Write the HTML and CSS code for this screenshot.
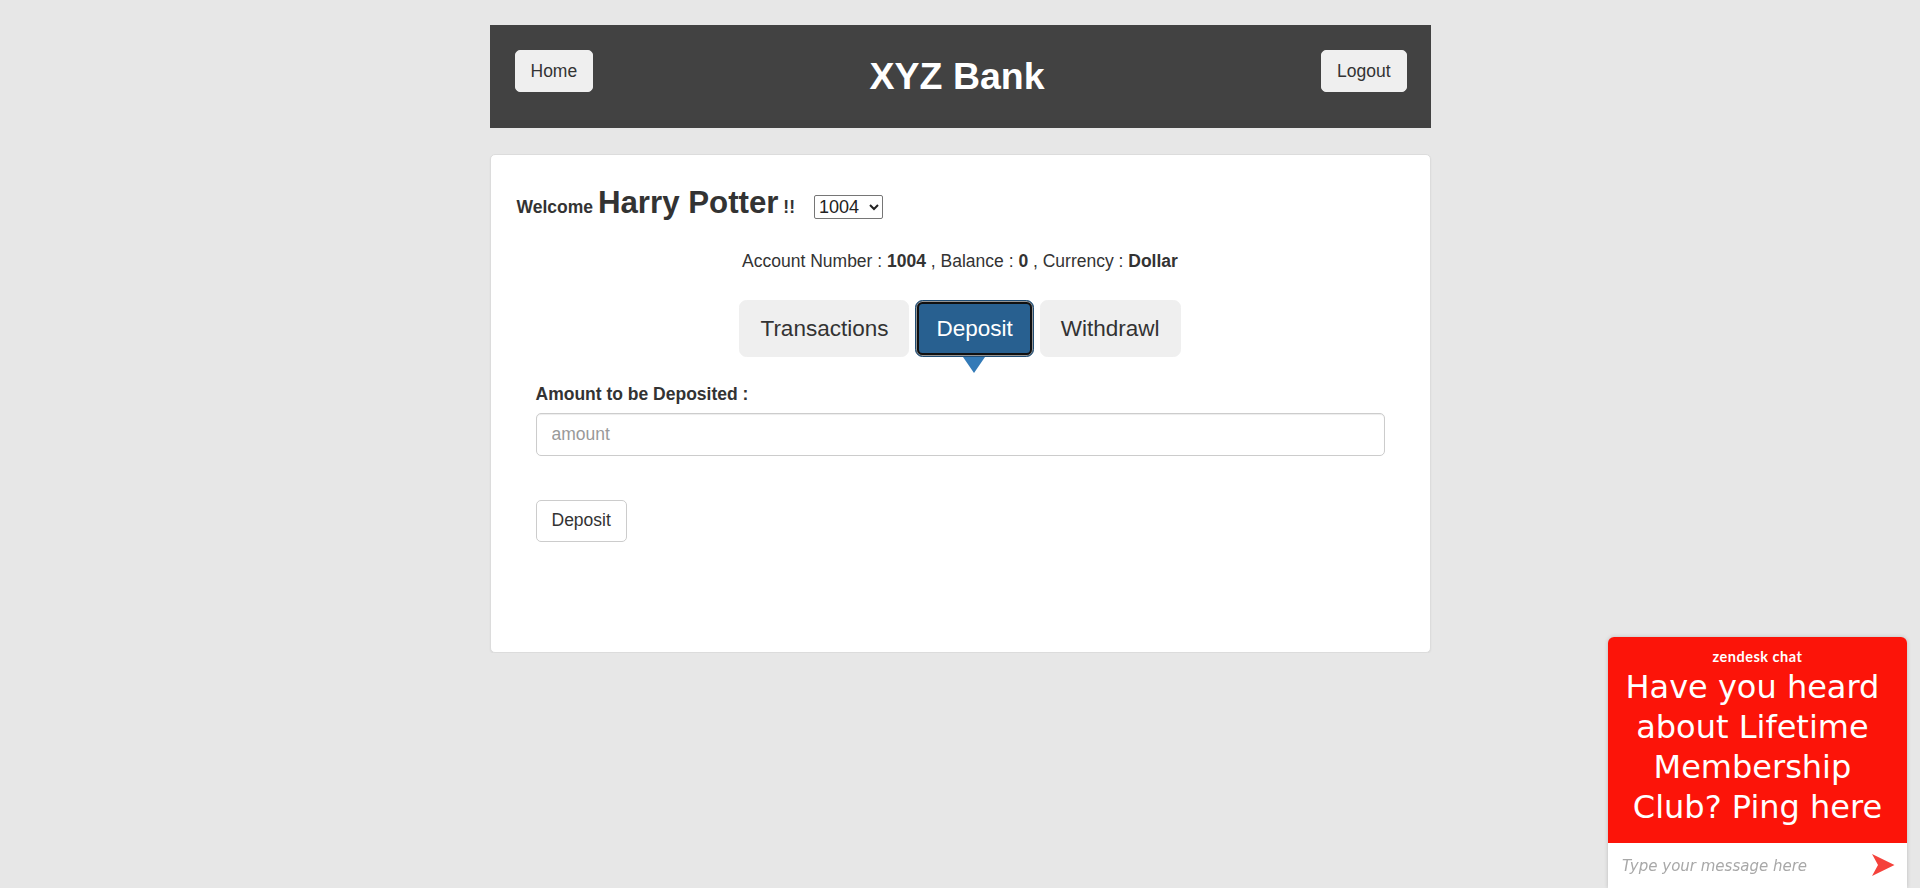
FILE: index.html
```html
<!DOCTYPE html>
<html lang="en">
<head>
<meta charset="utf-8">
<title>XYZ Bank</title>
<link rel="stylesheet" href="styles.css">
</head>
<body>
<div class="page">
  <header class="top">
    <button class="btn hbtn">Home</button>
    <h1 class="brand">XYZ Bank</h1>
    <button class="btn hbtn">Logout</button>
  </header>

  <main class="card">
    <div class="welcome-row">
      <strong>Welcome <span class="name">Harry Potter</span> !!</strong><select class="acct-select"><option>1004</option><option>1005</option><option>1006</option></select>
    </div>

    <div class="acct">Account Number : <strong>1004</strong> , Balance : <strong>0</strong> , Currency : <strong>Dollar</strong></div>

    <div class="tabs">
      <button class="btn tab">Transactions</button>
      <button class="btn tab active">Deposit</button>
      <button class="btn tab">Withdrawl</button>
    </div>

    <form class="form">
      <label class="lbl" for="amount">Amount to be Deposited :</label>
      <input id="amount" class="amount" type="number" placeholder="amount">
      <button type="button" class="btn submit">Deposit</button>
    </form>
  </main>
</div>

<aside class="zd">
  <div class="zd-head">
    <div class="zd-logo">zendesk chat</div>
    <div class="zd-msg">Have you heard&nbsp;<br>about Lifetime&nbsp;<br>Membership&nbsp;<br>Club? Ping here</div>
  </div>
  <div class="zd-input">
    <input class="zd-field" type="text" placeholder="Type your message here">
    <svg class="zd-send" width="23" height="23" viewBox="0 0 23 23" aria-hidden="true">
      <polygon points="0,0 22.5,11 0,22 6,11" fill="#f5423b"/>
    </svg>
  </div>
</aside>
</body>
</html>
```

FILE: styles.css
```css
html, body {
  margin: 0;
  padding: 0;
}
body {
  background: #e7e7e7;
  font-family: "Liberation Sans", Arial, sans-serif;
  font-size: 17.5px;
  line-height: 1.42857;
  color: #333;
}
.page {
  width: 941px;
  margin: 25px auto 0;
}

/* header */
.top {
  box-sizing: border-box;
  height: 103px;
  background: #424242;
  display: flex;
  justify-content: space-between;
  align-items: flex-start;
  padding: 25px 24px 0 25px;
}
.btn {
  font-family: "Liberation Sans", Arial, sans-serif;
  font-size: 17.5px;
  line-height: 1.42857;
  padding: 7.5px 15px;
  border: 1.25px solid transparent;
  border-radius: 5px;
  cursor: pointer;
  margin: 0;
}
.hbtn {
  background: #efefef;
  border-color: #efefef;
  color: #333;
}
.brand {
  margin: 6px 0 0;
  font-size: 37.5px;
  line-height: 1.1;
  font-weight: bold;
  color: #fff;
}

/* card */
.card {
  display: block;
  margin-top: 26px;
  background: #fff;
  border: 1.25px solid #dcdcdc;
  border-radius: 5px;
  box-shadow: 0 1px 2px rgba(0, 0, 0, 0.06);
  padding: 35px 0 110px;
}
.welcome-row {
  padding-left: 26px;
  line-height: 25px;
}
.welcome-row strong {
  font-weight: bold;
}
.name {
  font-size: 31.25px;
}
.acct-select {
  margin-left: 19px;
  font-family: "Liberation Sans", Arial, sans-serif;
  font-size: 18px;
  height: 24px;
  width: 69px;
  color: #222;
  background: #fff;
  border: 1px solid #767676;
  border-radius: 2px;
  vertical-align: baseline;
}
.acct {
  text-align: center;
  margin-top: 29px;
  line-height: 25px;
}
.tabs {
  display: flex;
  justify-content: center;
  gap: 6px;
  margin-top: 26px;
}
.tab {
  font-size: 22.5px;
  line-height: 1.33333;
  padding: 12.5px 20px;
  border-radius: 7.5px;
  background: #efefef;
  border-color: #efefef;
  color: #333;
}
.tab.active {
  position: relative;
  background: #286090;
  border-color: #204d74;
  color: #fff;
  box-shadow: inset 0 0 0 1px rgba(255, 255, 255, 0.55), inset 0 0 0 3px #101010;
}
.tab.active::after {
  content: "";
  position: absolute;
  left: 50%;
  top: 100%;
  margin-left: -11.5px;
  margin-top: 1px;
  border-left: 11.5px solid transparent;
  border-right: 11.5px solid transparent;
  border-top: 16px solid #337ab7;
}

/* form */
.form {
  margin: 25px 0 0;
  padding: 0 45px;
}
.lbl {
  display: block;
  font-weight: bold;
  line-height: 25px;
  margin-bottom: 6.25px;
}
.amount {
  display: block;
  box-sizing: border-box;
  width: 100%;
  height: 42.5px;
  padding: 7.5px 15px;
  font-family: "Liberation Sans", Arial, sans-serif;
  font-size: 17.5px;
  color: #555;
  background: #fff;
  border: 1.25px solid #ccc;
  border-radius: 5px;
  box-shadow: inset 0 1px 1px rgba(0, 0, 0, 0.075);
  outline: none;
}
.amount::placeholder {
  color: #999;
}
.submit {
  display: block;
  margin-top: 44px;
  background: #fff;
  border-color: #ccc;
  color: #333;
}

/* zendesk widget */
.zd {
  position: fixed;
  right: 13px;
  bottom: 0;
  width: 299px;
  border-radius: 6px 6px 0 0;
  overflow: hidden;
  box-shadow: 0 0 4px rgba(0, 0, 0, 0.18);
}
.zd-head {
  background: #fc1409;
  color: #fff;
  text-align: center;
  padding: 12px 0 16px;
}
.zd-logo {
  font-family: Lato, "Open Sans", sans-serif;
  font-weight: 700;
  font-size: 14.5px;
  line-height: 16px;
  letter-spacing: 0.5px;
}
.zd-msg {
  margin-top: 2px;
  font-family: "DejaVu Sans", Verdana, sans-serif;
  font-size: 32px;
  line-height: 40px;
}
.zd-input {
  box-sizing: border-box;
  height: 45px;
  background: #fff;
  display: flex;
  align-items: center;
  padding: 0 12px 0 14px;
}
.zd-field {
  flex: 1;
  min-width: 0;
  border: 0;
  outline: none;
  padding: 0;
  background: transparent;
  font-family: "DejaVu Sans", Verdana, sans-serif;
  font-style: italic;
  font-size: 15px;
  color: #555;
}
.zd-field::placeholder {
  color: #a8a8a8;
}
.zd-send {
  display: block;
  flex: none;
}
```
